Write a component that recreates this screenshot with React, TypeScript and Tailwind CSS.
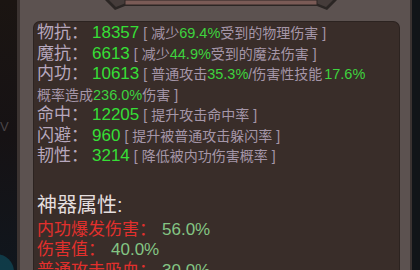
import React from 'react';

const font = { fontFamily: '"Liberation Sans", "Noto Sans CJK SC", sans-serif' };

const stats = [
    { label: '物抗', value: '18357', parts: ['减少', '69.4%', '受到的物理伤害', null, ']'] },
    { label: '魔抗', value: '6613', parts: ['减少', '44.9%', '受到的魔法伤害', null, ']'] },
    { label: '内功', value: '10613', parts: ['普通攻击', '35.3%', '/伤害性技能', '17.6%', ''] },
];

const simple = [
    { label: '命中', value: '12205', note: '提升攻击命中率' },
    { label: '闪避', value: '960', note: '提升被普通攻击躲闪率' },
    { label: '韧性', value: '3214', note: '降低被内功伤害概率' },
];

const artifact = [
    { label: '内功爆发伤害', value: '56.0%' },
    { label: '伤害值', value: '40.0%' },
    { label: '普通攻击吸血', value: '30.0%' },
];

const Bracket = ({ children }) => (
    <span className="text-[14px] text-[#a596a8] ml-[4px]">
        <span className="mr-[4px]">[</span>
        {children}
    </span>
);

const Label = ({ text }) => (
    <span className="text-[17px] text-[#b7a8be] w-[55px] shrink-0">{text}：</span>
);

const Ornament = () => (
    <svg width="232" height="11" viewBox="0 0 232 11" className="block">
        <polygon points="0,0 232,0 222,10 212,6 20,6 10,10" fill="#2b2624" />
        <polygon points="4,0 228,0 221,7 211,3 21,3 11,7" fill="#453c3a" />
        <rect x="20" y="0" width="192" height="5" fill="#7a5b56" stroke="#2e2725" strokeWidth="1" />
    </svg>
);

export default function App() {
    return (
        <div className="w-[420px] h-[270px] overflow-hidden flex bg-[#14100e]" style={font}>
            {/* left backdrop */}
            <div className="w-[17px] shrink-0 flex flex-col justify-between bg-gradient-to-b from-[#1b1512] via-[#161214] to-[#10161d]">
                <div className="mt-[120px] text-[13px] text-[#4a4548] leading-none">V</div>
                <div className="w-[18px] h-[22px] rounded-tr-full bg-[#0f4a5a] mb-[-6px] ml-[-4px] opacity-70" />
            </div>

            {/* frame */}
            <div className="flex-1 flex flex-col bg-[#5c5250] border-l-[3px] border-l-[#3b3331] border-r-[2px] border-r-[#3a3331]">
                <div className="h-[21px] shrink-0 pl-[85px]">
                    <Ornament />
                </div>
                <div className="flex-1 ml-[13px] mr-[10px] rounded-t-[7px] bg-[#392d29] border-t border-l border-r border-[#2c2320] pl-[3px] pt-[1px] leading-[20.5px]">
                    {stats.map((s) => (
                        <div key={s.label} className="flex items-baseline whitespace-nowrap">
                            <Label text={s.label} />
                            <span className="text-[17px] text-[#36df36]">{s.value}</span>
                            <Bracket>
                                {s.parts[0]}
                                <span className="text-[#3ed33e] text-[14.5px]">{s.parts[1]}</span>
                                {s.parts[2]}
                                {s.parts[3] && <span className="text-[#3ed33e] text-[14.5px] ml-[2px]">{s.parts[3]}</span>}
                                {s.parts[4] && <span className="ml-[4px]">{s.parts[4]}</span>}
                            </Bracket>
                        </div>
                    ))}
                    <div className="text-[14px] text-[#a596a8] whitespace-nowrap">
                        概率造成<span className="text-[#3ed33e] text-[14.5px]">236.0%</span>伤害<span className="ml-[4px]">]</span>
                    </div>
                    {simple.map((s) => (
                        <div key={s.label} className="flex items-baseline whitespace-nowrap">
                            <Label text={s.label} />
                            <span className="text-[17px] text-[#36df36]">{s.value}</span>
                            <Bracket>
                                {s.note}
                                <span className="ml-[4px]">]</span>
                            </Bracket>
                        </div>
                    ))}

                    <div className="mt-[26px] text-[20px] leading-[24px] text-[#e4dede]">神器属性:</div>
                    <div className="mt-[3px]">
                        {artifact.map((a) => (
                            <div key={a.label} className="flex items-baseline whitespace-nowrap text-[17px]">
                                <span className="text-[#e2302d]">{a.label}：</span>
                                <span className="text-[#84c584] ml-[6px]">{a.value}</span>
                            </div>
                        ))}
                    </div>
                </div>
            </div>

            {/* right backdrop */}
            <div className="w-[8px] shrink-0 bg-[#111518]" />
        </div>
    );
}
